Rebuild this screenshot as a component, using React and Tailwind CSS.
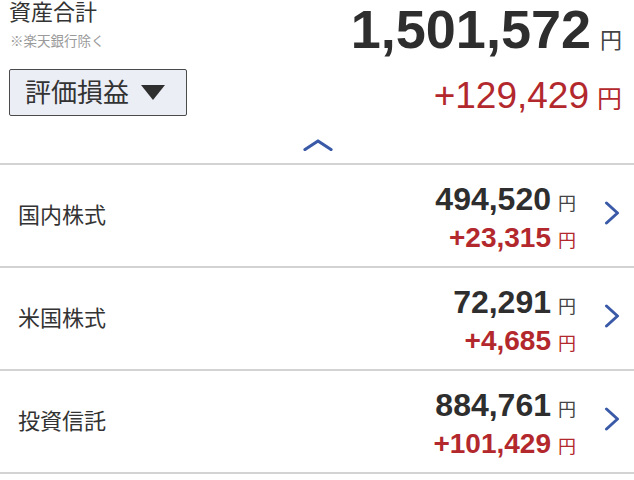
import React from "react";

const FONT = { fontFamily: '"Liberation Sans", "Noto Sans CJK JP", sans-serif' };

function ChevronRight() {
  return (
    <svg width="16" height="24" viewBox="0 0 16 24" className="block">
      <polyline points="2.5,2 13.5,12 2.5,22" fill="none" stroke="#3a5aa8" strokeWidth="3" strokeLinecap="round" strokeLinejoin="round" />
    </svg>
  );
}

function ChevronUp() {
  return (
    <svg width="30" height="12" viewBox="0 0 30 12" className="block">
      <polyline points="2,10.5 15,2 28,10.5" fill="none" stroke="#3a5aa8" strokeWidth="3.2" strokeLinecap="round" strokeLinejoin="round" />
    </svg>
  );
}

function Row({ label, value, gain }) {
  return (
    <div className="flex h-[103px] items-center justify-between border-b-2 border-[#d3d3d3] pl-[18px] pr-[14px]">
      <div className="text-[22px] leading-[22px] text-[#333]">{label}</div>
      <div className="flex items-center">
        <div className="flex flex-col items-end pt-[9px]">
          <div className="flex items-baseline leading-[32px]">
            <span className="text-[32px] font-bold text-[#2e2e2e]">{value}</span>
            <span className="ml-[7px] text-[18px] text-[#444]">円</span>
          </div>
          <div className="mt-[2px] flex items-baseline leading-[32px]">
            <span className="text-[28px] font-bold text-[#b3282d]">{gain}</span>
            <span className="ml-[7px] text-[18px] text-[#b3282d]">円</span>
          </div>
        </div>
        <div className="ml-[28px] -mt-[6px]">
          <ChevronRight />
        </div>
      </div>
    </div>
  );
}

export default function App() {
  return (
    <div className="h-[480px] w-[634px] overflow-hidden bg-white text-[#333]" style={FONT}>
      <div className="border-b-2 border-[#d3d3d3]">
        <div className="flex h-[128px] justify-between">
          <div className="pl-[9px]">
            <div className="pt-[2px] text-[22px] leading-[22px] text-[#333]">資産合計</div>
            <div className="mt-[11px] pl-[1px] text-[13.5px] leading-[14px] text-[#9a9a9a]">※楽天銀行除く</div>
            <button className="mt-[20px] flex h-[47px] w-[178px] items-center rounded-[2px] border-[1.5px] border-[#4a4a4a] bg-[#eceef6] pl-[15px]">
              <span className="text-[26px] leading-[28px] text-[#333]">評価損益</span>
              <svg width="24" height="15" viewBox="0 0 24 15" className="ml-[12px] block">
                <polygon points="0,0 24,0 12,15" fill="#2f2f2f" />
              </svg>
            </button>
          </div>
          <div className="flex flex-col items-end pr-[12px]">
            <div className="flex items-baseline leading-[58px]">
              <span className="text-[54px] font-bold text-[#2e2e2e]">1,501,572</span>
              <span className="ml-[9px] text-[22px] text-[#444]">円</span>
            </div>
            <div className="mt-[6px] flex items-baseline leading-[40px]">
              <span className="text-[37px] text-[#b3282d]">+129,429</span>
              <span className="ml-[8px] text-[25px] text-[#b3282d]">円</span>
            </div>
          </div>
        </div>
        <div className="flex h-[35px] items-center justify-center pb-[2px] pl-[1px]">
          <ChevronUp />
        </div>
      </div>
      <Row label="国内株式" value="494,520" gain="+23,315" />
      <Row label="米国株式" value="72,291" gain="+4,685" />
      <Row label="投資信託" value="884,761" gain="+101,429" />
    </div>
  );
}
